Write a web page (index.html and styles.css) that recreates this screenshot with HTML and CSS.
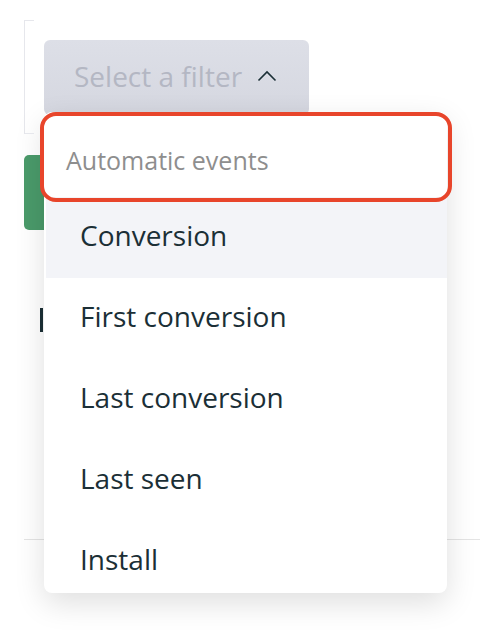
FILE: index.html
```html
<!DOCTYPE html>
<html lang="en">
  <head>
    <meta charset="UTF-8" />
    <meta name="viewport" content="width=device-width, initial-scale=1.0" />
    <title>Filters</title>
    <link rel="stylesheet" href="styles.css">
  </head>
  <body>
    <div class="page">
      <div class="filter-panel">
        <div class="filter-wrap">
          <button class="filter-button">
            <span>Select a filter</span>
            <svg class="chevron" width="20" height="12" viewBox="0 0 20 12">
              <polyline points="1.5,10.5 10,2 18.5,10.5" fill="none" stroke="#1b2f36" stroke-width="1.6" />
            </svg>
          </button>

          <div class="dropdown">
            <div class="dropdown-header">Automatic events</div>
            <ul class="dropdown-list">
              <li class="active">Conversion</li>
              <li>First conversion</li>
              <li>Last conversion</li>
              <li>Last seen</li>
              <li>Install</li>
            </ul>
          </div>
        </div>
      </div>

      <div class="green-button"></div>
      <div class="dark-mark"></div>
      <div class="rule"></div>
    </div>
  </body>
</html>
```

FILE: styles.css
```css
* {
  margin: 0;
  padding: 0;
  box-sizing: border-box;
}

body {
  font-family: "Open Sans", Arial, sans-serif;
  background-color: #fff;
  height: 100vh;
  overflow: hidden;
}

.page {
  padding: 20px 0 0 24px;
}

/* bracket-like panel around the filter */
.filter-panel {
  position: relative;
  height: 114px;
  border-left: 1px solid #e6e7ec;
  padding: 20px 0 0 19px;
}

.filter-panel::before,
.filter-panel::after {
  content: "";
  position: absolute;
  left: 0;
  width: 9px;
  height: 1px;
  background-color: #e6e7ec;
}

.filter-panel::before {
  top: 0;
}

.filter-panel::after {
  bottom: 0;
}

.filter-wrap {
  position: relative;
  width: 265px;
}

.filter-button {
  display: flex;
  align-items: center;
  gap: 15px;
  width: 265px;
  height: 75px;
  padding: 0 0 4px 30px;
  border: none;
  border-radius: 6px;
  background: linear-gradient(#dddfe7, #d5d7e0);
  font-family: inherit;
  font-size: 28px;
  color: #b4b7c3;
  cursor: pointer;
}

.chevron {
  flex: none;
}

.dropdown {
  position: absolute;
  top: 72px;
  left: 0;
  width: 403px;
  height: 481px;
  background-color: #fff;
  border-radius: 8px;
  box-shadow: 0 10px 30px rgba(0, 0, 0, 0.13);
}

.dropdown-header {
  position: relative;
  height: 85px;
  padding-left: 22px;
  display: flex;
  align-items: center;
  padding-top: 10px;
  font-size: 25px;
  color: #8e8e8e;
  z-index: 1;
}

.dropdown-header::after {
  content: "";
  position: absolute;
  top: 0;
  left: -4px;
  right: -5px;
  bottom: -5px;
  border: 4px solid #e8452b;
  border-radius: 16px;
}

.dropdown-list {
  list-style-type: none;
  height: 396px;
  overflow: hidden;
  border-radius: 0 0 8px 8px;
}

.dropdown-list li {
  height: 81px;
  display: flex;
  align-items: center;
  padding: 0 0 5px 36px;
  font-size: 28px;
  color: #1b2f36;
  cursor: pointer;
}

.dropdown-list li.active {
  background-color: #f3f4f8;
  margin-left: 2px;
  padding-left: 34px;
}

.green-button {
  width: 60px;
  height: 75px;
  margin-top: 21px;
  border-radius: 5px;
  background-color: #4a9a6a;
}

.dark-mark {
  width: 3px;
  height: 24px;
  margin: 78px 0 0 16px;
  background-color: #1b2f36;
}

.rule {
  height: 1px;
  margin-top: 207px;
  background-color: #e4e4e4;
}
```
